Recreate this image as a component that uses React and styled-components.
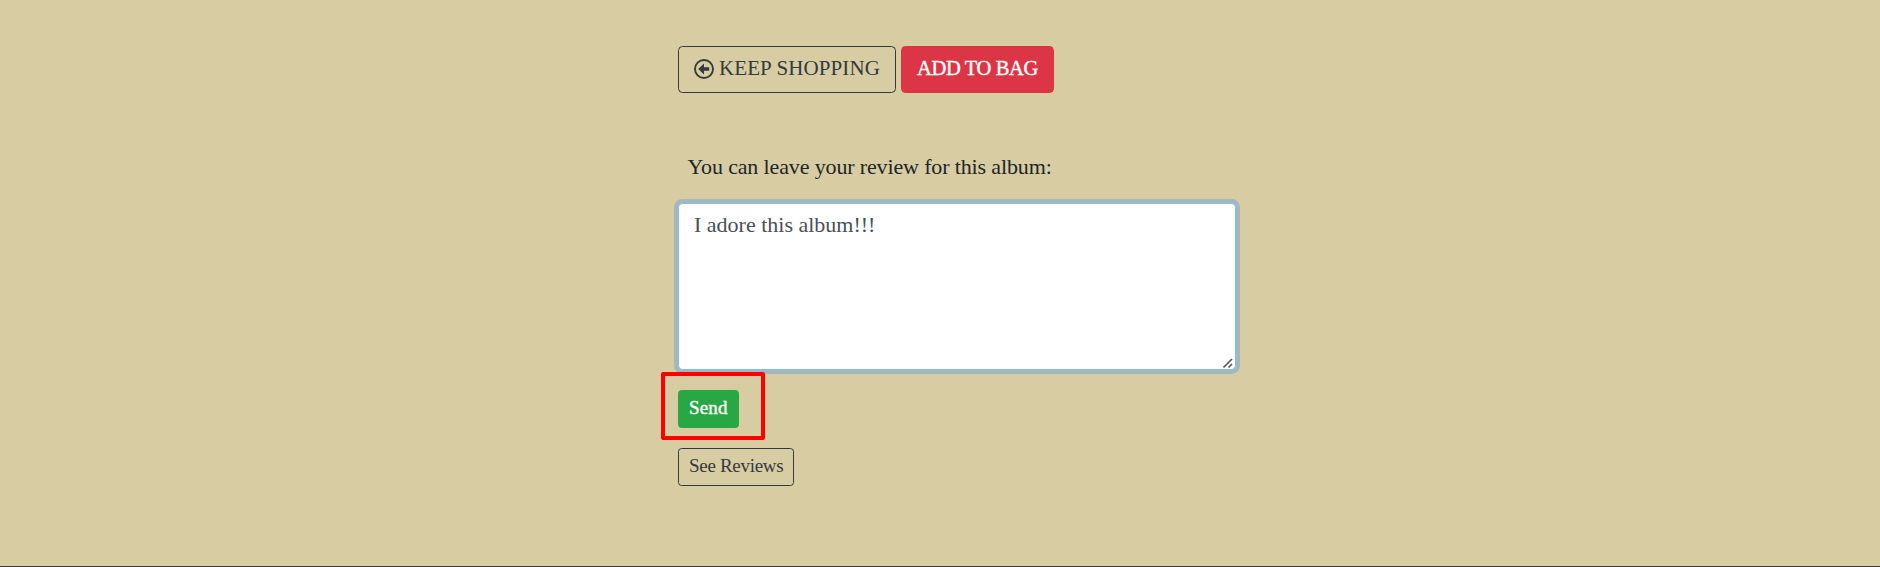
import React from "react";
import styled, { createGlobalStyle } from "styled-components";

const GlobalStyle = createGlobalStyle`
  *, *::before, *::after { box-sizing: border-box; }
  body { margin: 0; background: #d8cca3; font-family: "Liberation Serif", "Times New Roman", serif; }
`;

const Page = styled.main`
  height: 567px;
  padding: 46px 0 0 678px;
  border-bottom: 1px solid #343a40;
  display: flex;
  flex-direction: column;
  align-items: flex-start;
  overflow: hidden;
`;

const Actions = styled.div`
  display: flex;
  gap: 5px;
`;

const variants = {
  outline: { color: "#343a40", fill: "transparent", border: "#343a40" },
  danger: { color: "#fff", fill: "#dc3545", border: "#dc3545" },
  success: { color: "#fff", fill: "#28a745", border: "#28a745" },
};

const Button = styled.button`
  display: flex;
  align-items: center;
  width: ${(p) => p.$width}px;
  height: ${(p) => (p.$small ? 38 : 47)}px;
  padding: ${(p) => (p.$small ? "0 0 2px 10px" : "0 0 2px 15px")};
  border: 1px solid ${(p) => variants[p.$variant].border};
  border-radius: ${(p) => (p.$small ? 3.5 : 4.5)}px;
  background: ${(p) => variants[p.$variant].fill};
  color: ${(p) => variants[p.$variant].color};
  font-family: inherit;
  font-size: ${(p) => p.$size || (p.$small ? 19 : 21)}px;
  line-height: 1.5;
  letter-spacing: ${(p) => p.$spacing || 0}px;
  white-space: nowrap;
  -webkit-text-stroke: ${(p) => (p.$variant === "outline" ? 0 : 0.4)}px currentColor;
`;

const Icon = styled.svg`
  flex: none;
  width: 20px;
  height: 20px;
  margin: 0 5px 0 0;
`;

const Label = styled.label`
  margin: 56px 0 0 9.5px;
  height: 35px;
  color: #212529;
  font-size: 22px;
  line-height: 35px;
  letter-spacing: -0.14px;
`;

const ReviewField = styled.div`
  position: relative;
  margin: 19px 0 20px;
`;

const ReviewInput = styled.textarea`
  display: block;
  width: 558px;
  height: 167px;
  padding: 6px 15px;
  border: 1px solid #80bdff;
  border-radius: 4.5px;
  outline: 0;
  box-shadow: 0 0 0 4px rgba(0, 123, 255, 0.25);
  background: #fff;
  color: #495057;
  font: 22px/30px "Liberation Serif", "Times New Roman", serif;
  resize: both;

  &::-webkit-resizer {
    background: transparent;
  }
`;

const Grip = styled.svg`
  position: absolute;
  right: 2px;
  bottom: 1px;
  width: 12px;
  height: 12px;
  pointer-events: none;
`;

const SendArea = styled.div`
  position: relative;
  margin-bottom: 20px;
`;

const Highlight = styled.div`
  position: absolute;
  left: -17px;
  top: -18px;
  width: 104px;
  height: 68px;
  border: 4px solid #ff0000;
  border-radius: 2px;
  pointer-events: none;
`;

export default function App() {
  return (
    <>
      <GlobalStyle />
      <Page>
        <Actions>
          <Button $variant="outline" $width={218} $spacing={0.1}>
            <Icon viewBox="0 0 20 20" aria-hidden="true">
              <circle cx="10" cy="10" r="9" fill="none" stroke="currentColor" strokeWidth="1.9" />
              <path d="M4.2 10 10 4.6V8.2h5.2v3.6H10v3.6Z" fill="currentColor" />
            </Icon>
            KEEP SHOPPING
          </Button>
          <Button $variant="danger" $width={153} $size={20.5} $spacing={-0.35}>
            ADD TO BAG
          </Button>
        </Actions>
        <Label htmlFor="review">You can leave your review for this album:</Label>
        <ReviewField>
          <ReviewInput id="review" defaultValue="I adore this album!!!" spellCheck={false} />
          <Grip viewBox="0 0 12 12" aria-hidden="true">
            <path d="M1.5 10.5 10 2M6.5 10.5 10 7" fill="none" stroke="#55585c" strokeWidth="1.7" />
          </Grip>
        </ReviewField>
        <SendArea>
          <Button $variant="success" $small $width={61} $spacing={0.15}>
            Send
          </Button>
          <Highlight />
        </SendArea>
        <Button $variant="outline" $small $width={116} $spacing={-0.3}>
          See Reviews
        </Button>
      </Page>
    </>
  );
}
